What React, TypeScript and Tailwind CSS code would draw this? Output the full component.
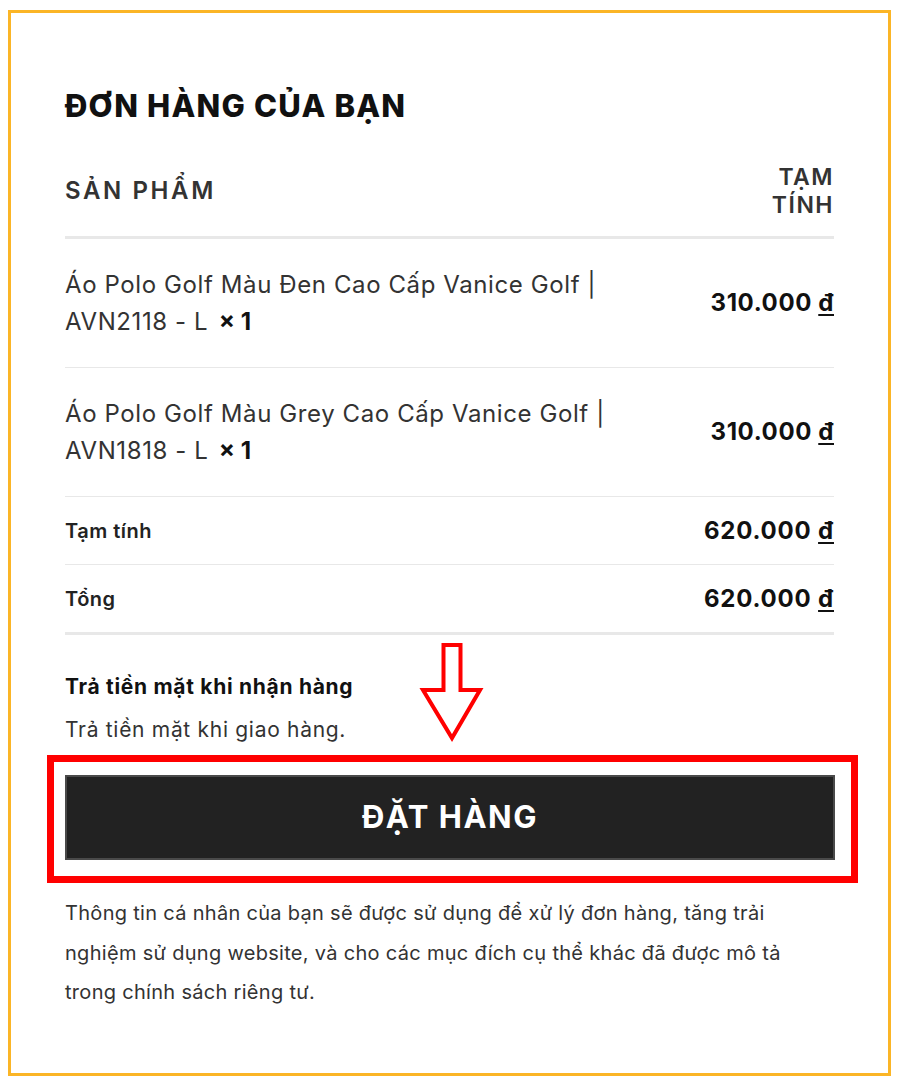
import React from 'react';

const ITEMS = [
  { name: 'Áo Polo Golf Màu Đen Cao Cấp Vanice Golf | AVN2118 - L', qty: 1, price: '310.000' },
  { name: 'Áo Polo Golf Màu Grey Cao Cấp Vanice Golf | AVN1818 - L', qty: 1, price: '310.000' },
];

function Dong() {
  return <span className="underline underline-offset-[3px] decoration-2">đ</span>;
}

function DownArrow() {
  return (
    <svg width="66" height="104" viewBox="0 0 66 104" className="absolute left-[408px] top-[628px]">
      <polygon
        points="24.5,4 41.5,4 41.5,49 61,49 33,97 4,49 24.5,49"
        fill="white"
        stroke="#ff0000"
        strokeWidth="4"
      />
    </svg>
  );
}

export default function App() {
  return (
    <div className="min-h-screen bg-white pt-[10px] pl-[8px] font-['Inter','Noto_Sans',sans-serif]">
      <div className="relative w-[883px] h-[1066px] border-[3px] border-[#fbb526] px-[54px] pt-[73px]">
        <h2 className="text-[31px] leading-[40px] font-extrabold text-[#111] tracking-[1.2px]">ĐƠN HÀNG CỦA BẠN</h2>

        {/* bảng sản phẩm */}
        <div className="mt-[37px] flex items-center justify-between border-b-[3px] border-[#e8e8e8] pb-[17px]">
          <span className="text-[24px] font-semibold text-[#333] tracking-[2.6px]">SẢN PHẨM</span>
          <span className="text-[23px] leading-[28px] font-semibold text-[#333] text-right tracking-[1.5px]">
            TẠM
            <br />
            TÍNH
          </span>
        </div>

        {ITEMS.map((it) => (
          <div key={it.name} className="flex items-center justify-between border-b border-[#e8e8e8] py-[27px]">
            <p className="w-[600px] text-[24px] leading-[37px] text-[#333] tracking-[0.6px]">
              {it.name}{' '}
              <b className="ml-[3px] font-bold text-[#111] tracking-normal">×&nbsp;{it.qty}</b>
            </p>
            <div className="text-[24px] font-bold text-[#111] tracking-[0.6px]">
              {it.price} <Dong />
            </div>
          </div>
        ))}

        <div className="flex items-center justify-between border-b border-[#e8e8e8] py-[17px]">
          <span className="text-[20px] font-semibold text-[#222] tracking-[0.5px]">Tạm tính</span>
          <span className="text-[24px] leading-[33px] font-bold text-[#111] tracking-[0.8px]">
            620.000 <Dong />
          </span>
        </div>
        <div className="flex items-center justify-between border-b-[3px] border-[#e8e8e8] py-[17px]">
          <span className="text-[20px] font-semibold text-[#222] tracking-[0.5px]">Tổng</span>
          <span className="text-[24px] leading-[33px] font-bold text-[#111] tracking-[0.8px]">
            620.000 <Dong />
          </span>
        </div>

        {/* thanh toán */}
        <div className="mt-[30px] text-[21px] leading-[43px] font-bold text-[#111] tracking-[0.7px]">Trả tiền mặt khi nhận hàng</div>
        <div className="text-[21px] leading-[43px] text-[#333] tracking-[0.7px]">Trả tiền mặt khi giao hàng.</div>

        <div className="mt-[4px] -ml-[18px] -mr-[24px] border-[7px] border-[#ff0000] pl-[11px] pr-[16px] pt-[13px] pb-[16px]">
          <button
            type="button"
            className="w-full h-[85px] bg-[#222] border-2 border-[#4a4a4a] text-white text-[31px] font-bold tracking-[1.5px]"
          >
            ĐẶT HÀNG
          </button>
        </div>

        <p className="mt-[11px] text-[20px] leading-[39.5px] text-[#333] tracking-[0.3px]">
          Thông tin cá nhân của bạn sẽ được sử dụng để xử lý đơn hàng, tăng trải nghiệm sử dụng website, và cho các mục
          đích cụ thể khác đã được mô tả trong chính sách riêng tư.
        </p>

        <DownArrow />
      </div>
    </div>
  );
}
